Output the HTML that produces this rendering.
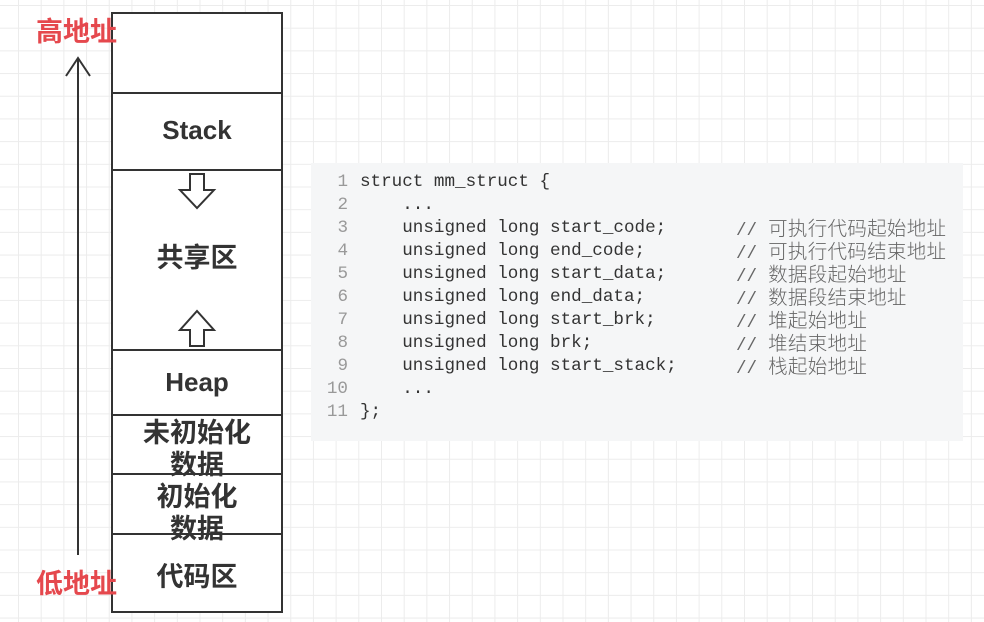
<!DOCTYPE html>
<html><head><meta charset="utf-8"><style>
html,body{margin:0;padding:0}
body{width:984px;height:622px;position:relative;overflow:hidden;background-color:#fff;
background-image:linear-gradient(#ececec 1px,transparent 1px),linear-gradient(90deg,#ececec 1px,transparent 1px);
background-size:22.7px 22.7px;background-position:18px 5px;}
.box{position:absolute;left:111px;top:12px;width:168px;height:597px;border:2px solid #333;background:#fff}
.div{position:absolute;left:111px;width:172px;height:2px;background:#333}
.lbl{position:absolute;left:111px;width:172px;text-align:center;font-weight:bold;font-size:27px;color:#333;font-family:"Liberation Sans","Noto Sans CJK SC",sans-serif;line-height:32px}
.en{font-size:26px}
.red{position:absolute;color:#e5484d;font-weight:bold;font-size:27px;line-height:34px;font-family:"Liberation Sans","Noto Sans CJK SC",sans-serif}
.code{position:absolute;left:311px;top:163px;width:652px;height:278px;background:#f5f6f7}
.ln{position:absolute;font-family:"Liberation Mono",monospace;font-size:17.6px;color:#333;white-space:pre;left:0;width:100%;height:23px;line-height:23px}
.ln b{font-weight:normal;color:#999;position:absolute;width:37px;text-align:right;left:0}
.ln span.c{position:absolute;left:49px}
.ln i{font-style:normal;position:absolute;left:425px;color:#666;top:-2px}
.ln i em{font-style:normal;font-family:"Noto Sans CJK SC",sans-serif;font-weight:300;font-size:19.5px;letter-spacing:0.3px;color:#666;margin-left:11px}
</style></head><body>
<svg style="position:absolute;left:0;top:0" width="984" height="622">
<line x1="78" y1="58" x2="78" y2="555" stroke="#333" stroke-width="2"/>
<polyline points="66,76 78,58 90,76" fill="none" stroke="#333" stroke-width="2"/>
</svg>
<div class="box"></div>
<div class="div" style="top:92px"></div>
<div class="div" style="top:169px"></div>
<div class="div" style="top:349px"></div>
<div class="div" style="top:414px"></div>
<div class="div" style="top:473px"></div>
<div class="div" style="top:533px"></div>
<svg style="position:absolute;left:0;top:0" width="984" height="622">
<path d="M190,174 H204 V190 H214 L197,208 L180,190 H190 Z" fill="#fff" stroke="#333" stroke-width="2"/>
<path d="M190,346 H204 V330 H214 L197,311 L180,330 H190 Z" fill="#fff" stroke="#333" stroke-width="2"/>
</svg>
<div class="red" style="left:36px;top:15px">高地址</div>
<div class="red" style="left:36px;top:567px">低地址</div>
<div class="lbl en" style="top:114px">Stack</div>
<div class="lbl" style="top:242px">共享区</div>
<div class="lbl en" style="top:366px">Heap</div>
<div class="lbl" style="top:417px">未初始化</div>
<div class="lbl" style="top:449px">数据</div>
<div class="lbl" style="top:481px">初始化</div>
<div class="lbl" style="top:513px">数据</div>
<div class="lbl" style="top:561px">代码区</div>
<div class="code">
<div class="ln" style="top:8px"><b>1</b><span class="c">struct mm_struct {</span></div>
<div class="ln" style="top:31px"><b>2</b><span class="c">    ...</span></div>
<div class="ln" style="top:54px"><b>3</b><span class="c">    unsigned long start_code;</span><i>//<em>可执行代码起始地址</em></i></div>
<div class="ln" style="top:77px"><b>4</b><span class="c">    unsigned long end_code;</span><i>//<em>可执行代码结束地址</em></i></div>
<div class="ln" style="top:100px"><b>5</b><span class="c">    unsigned long start_data;</span><i>//<em>数据段起始地址</em></i></div>
<div class="ln" style="top:123px"><b>6</b><span class="c">    unsigned long end_data;</span><i>//<em>数据段结束地址</em></i></div>
<div class="ln" style="top:146px"><b>7</b><span class="c">    unsigned long start_brk;</span><i>//<em>堆起始地址</em></i></div>
<div class="ln" style="top:169px"><b>8</b><span class="c">    unsigned long brk;</span><i>//<em>堆结束地址</em></i></div>
<div class="ln" style="top:192px"><b>9</b><span class="c">    unsigned long start_stack;</span><i>//<em>栈起始地址</em></i></div>
<div class="ln" style="top:215px"><b>10</b><span class="c">    ...</span></div>
<div class="ln" style="top:238px"><b>11</b><span class="c">};</span></div>
</div>
</body></html>
